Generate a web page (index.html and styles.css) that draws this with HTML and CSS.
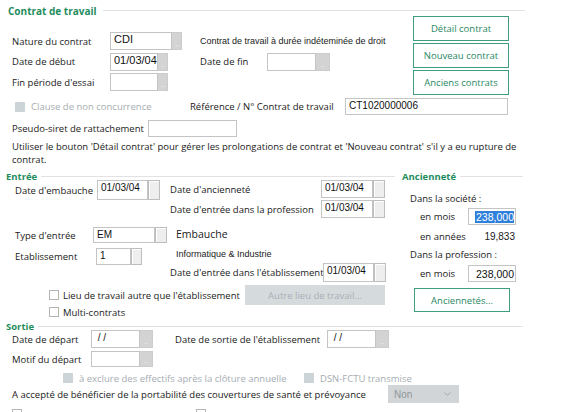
FILE: index.html
```html
<!DOCTYPE html>
<html lang="fr">
<head>
<meta charset="utf-8">
<title>Contrat de travail</title>
<link rel="stylesheet" href="styles.css">
</head>
<body>
<section class="s1">
  <div class="legend lg1"><span class="title">Contrat de travail</span><span class="rule"></span></div>
  <div class="top">
    <div class="left">
      <div class="row r1">
        <span class="lbl w98">Nature du contrat</span>
        <span class="fld"><span class="box w62 val big">CDI</span><span class="dots">...</span></span>
        <span class="note n1">Contrat de travail à durée indéteminée de droit</span>
      </div>
      <div class="row r2">
        <span class="lbl w98">Date de début</span>
        <span class="fld"><span class="box w48 val big">01/03/04</span><span class="dots">...</span></span>
        <span class="lbl fin">Date de fin</span>
        <span class="fld"><span class="box w49 val"></span><span class="dots d14">...</span></span>
      </div>
      <div class="row r3">
        <span class="lbl w98">Fin période d'essai</span>
        <span class="fld"><span class="box w48 val"></span><span class="dots">...</span></span>
      </div>
    </div>
    <div class="btns">
      <span class="gbtn">Détail contrat</span>
      <span class="gbtn">Nouveau contrat</span>
      <span class="gbtn">Anciens contrats</span>
    </div>
  </div>
  <div class="row r4">
    <span class="chkitem ci1"><span class="chk off"></span><span class="dis">Clause de non concurrence</span></span>
    <span class="lbl w155">Référence / N° Contrat de travail</span>
    <span class="fld"><span class="box w163 val">CT1020000006</span></span>
  </div>
  <div class="row r5">
    <span class="lbl w136">Pseudo-siret de rattachement</span>
    <span class="fld"><span class="box w89 val"></span></span>
  </div>
  <p class="para">Utiliser le bouton 'Détail contrat' pour gérer les prolongations de contrat et 'Nouveau contrat' s'il y a eu rupture de contrat.</p>
</section>

<section class="s2">
  <div class="colL">
    <div class="legend lg2"><span class="title">Entrée</span><span class="rule"></span></div>
    <div class="cols">
      <div class="c1">
        <div class="row e1">
          <span class="lbl w82">Date d'embauche</span>
          <span class="fld"><span class="box w51 val">01/03/04</span><span class="dots lite d12"></span></span>
        </div>
        <div class="row e2">
          <span class="lbl w78">Type d'entrée</span>
          <span class="fld"><span class="box w62 val">EM</span><span class="dots lite d12"></span></span>
        </div>
        <div class="row e3">
          <span class="lbl w81">Etablissement</span>
          <span class="fld"><span class="box w35 val">1</span><span class="dots lite d11"></span></span>
        </div>
      </div>
      <div class="c2">
        <div class="row f1">
          <span class="lbl w151">Date d'ancienneté</span>
          <span class="fld"><span class="box w52 val">01/03/04</span><span class="dots lite d12"></span></span>
        </div>
        <div class="row f2">
          <span class="lbl w151">Date d'entrée dans la profession</span>
          <span class="fld"><span class="box w52 val">01/03/04</span><span class="dots lite d12"></span></span>
        </div>
        <div class="row f3"><span class="info emb">Embauche</span></div>
        <div class="row f4"><span class="note">Informatique &amp; Industrie</span></div>
        <div class="row f5">
          <span class="lbl w153">Date d'entrée dans l'établissement</span>
          <span class="fld"><span class="box w51 val">01/03/04</span><span class="dots lite d12"></span></span>
        </div>
      </div>
    </div>
    <div class="row k1">
      <span class="chkitem ci2"><span class="chk"></span><span>Lieu de travail autre que l'établissement</span></span>
      <span class="disbtn">Autre lieu de travail...</span>
    </div>
    <div class="row k2">
      <span class="chkitem"><span class="chk"></span><span>Multi-contrats</span></span>
    </div>
  </div>
  <div class="colR">
    <div class="legend lg3"><span class="title">Ancienneté</span><span class="rule"></span></div>
    <div class="row a1">Dans la société :</div>
    <div class="row a2">
      <span class="lbl w48">en mois</span>
      <span class="fld"><span class="box w48 val num"><span class="sel">238,000</span></span></span>
    </div>
    <div class="row a3">
      <span class="lbl w48">en années</span>
      <span class="numv">19,833</span>
    </div>
    <div class="row a4">Dans la profession :</div>
    <div class="row a5">
      <span class="lbl w48">en mois</span>
      <span class="fld"><span class="box w48 val num">238,000</span></span>
    </div>
    <div class="row a6"><span class="gbtn wide">Anciennetés...</span></div>
  </div>
</section>

<section class="s3">
  <div class="legend lg4"><span class="title">Sortie</span><span class="rule"></span></div>
  <div class="row g1">
    <span class="lbl w79">Date de départ</span>
    <span class="fld"><span class="box w49 val">&nbsp;/ /</span><span class="dots d13">...</span></span>
    <span class="lbl w152 sortie">Date de sortie de l'établissement</span>
    <span class="fld"><span class="box w49 val">&nbsp;/ /</span><span class="dots d13">...</span></span>
  </div>
  <div class="row g2">
    <span class="lbl w79">Motif du départ</span>
    <span class="fld"><span class="box w49 val"></span><span class="dots d13">...</span></span>
  </div>
  <div class="row g3">
    <span class="chkitem ci3"><span class="chk off"></span><span class="dis">à exclure des effectifs après la clôture annuelle</span></span>
    <span class="chkitem"><span class="chk off"></span><span class="dis">DSN-FCTU transmise</span></span>
  </div>
  <div class="row g4">
    <span class="lbl w376">A accepté de bénéficier de la portabilité des couvertures de santé et prévoyance</span>
    <span class="select"><span>Non</span><svg class="chev" width="7" height="4" viewBox="0 0 7 4"><path d="M0.5 0.5 L3.5 3.3 L6.5 0.5" fill="none" stroke="#a4a9ad" stroke-width="1"/></svg></span>
  </div>
  <div class="row g5">
    <span class="chkitem ci4"><span class="chk"></span></span>
    <span class="chkitem"><span class="chk"></span></span>
  </div>
</section>
</body>
</html>
```

FILE: styles.css
```css
* { box-sizing: border-box; }
html, body { margin: 0; padding: 0; }
body {
  width: 576px;
  height: 412px;
  overflow: hidden;
  background: #ffffff;
  font-family: "Open Sans", "Noto Sans", sans-serif;
  font-size: 9.5px;
  color: #1a1a1a;
}
section { display: block; }

/* legends */
.legend { display: flex; align-items: flex-start; white-space: nowrap; }
.legend .title { color: #1f8d5d; font-weight: 700; }
.legend .rule { flex: 1; border-top: 1px solid #e2e2e2; margin-left: 4px; }
.lg1 { height: 16px; padding-left: 8px; width: 525px; }
.lg1 .title { line-height: 14px; margin-top: 4px; font-size: 10px; }
.lg1 .rule { margin-top: 10px; margin-left: 6px; }
.lg2, .lg3, .lg4 { height: 10px; }
.lg2 .title, .lg3 .title, .lg4 .title { line-height: 12px; margin-top: 1px; }
.lg2 .rule, .lg3 .rule, .lg4 .rule { margin-top: 6px; }
.lg2 { padding-left: 6px; padding-right: 3px; }
.lg3 { padding-left: 4px; }
.lg4 { padding-left: 6px; width: 523px; }

/* rows and fields */
.row { display: flex; align-items: center; white-space: nowrap; }
.lbl { flex: none; }
.fld { display: flex; flex: none; align-self: stretch; }
.box {
  display: block;
  border: 1px solid #c4c4c4;
  background: #fff;
  font-family: "Liberation Sans", Arial, sans-serif;
  font-size: 10px;
  line-height: 12px;
  padding: 1px 0 0 3px;
  color: #111;
  overflow: hidden;
}
.box.big { font-size: 11px; padding-top: 0; }
.box.num { text-align: right; padding: 2px 1px 0 0; font-size: 10.5px; }
.sel { background: #2f7fdc; color: #ffffff; padding: 0 0 0 1px; }
.dots {
  display: flex;
  align-items: flex-end;
  justify-content: center;
  width: 10px;
  background: #d3d3d3;
  border: 1px solid #cccccc;
  border-left: none;
  color: #f4f4f4;
  font-size: 6px;
  line-height: 9px;
  letter-spacing: -0.5px;
  overflow: hidden;
}
.dots.lite { background: #eeeeee; border: 1px solid #bdbdbd; box-shadow: inset 1px 1px 0 #fff; }
.d11 { width: 11px; }
.d12 { width: 12px; }
.d13 { width: 13px; }
.d14 { width: 14px; }

.w35 { width: 35px; } .w48 { width: 48px; } .w49 { width: 49px; } .w51 { width: 51px; }
.w52 { width: 52px; } .w62 { width: 62px; } .w78 { width: 78px; } .w79 { width: 79px; }
.w81 { width: 81px; } .w82 { width: 82px; } .w89 { width: 89px; } .w98 { width: 98px; }
.w136 { width: 136px; } .w151 { width: 151px; } .w152 { width: 152px; } .w153 { width: 153px; }
.w155 { width: 155px; } .w163 { width: 163px; } .w376 { width: 376px; }

.note {
  font-family: "Liberation Sans", Arial, sans-serif;
  font-size: 9px;
  color: #1a1a1a;
}
.info { font-size: 10.5px; }

/* checkboxes */
.chkitem { display: flex; align-items: center; flex: none; }
.chk {
  width: 10px; height: 10px; flex: none;
  border: 1px solid #b4b4b4; background: #fff;
  margin-right: 4px;
}
.chk.off { background: #ccd4d8; border-color: #ccd4d8; margin-right: 6px; }
.dis { color: #a6adb2; }

/* green buttons */
.gbtn {
  display: flex; align-items: center; justify-content: center;
  height: 25px; width: 96px;
  border: 1.5px solid #3d9d7d;
  background: #fff;
  color: #2a8865;
  font-size: 9.5px;
}
.disbtn {
  display: flex; align-items: center; justify-content: center;
  width: 140px; height: 20px;
  background: #d5dadd;
  color: #a9b0b5;
}

/* section 1 */
.s1 { height: 166px; }
.top { display: flex; }
.top .left { width: 413px; padding: 16px 0 0 12px; }
.btns { display: flex; flex-direction: column; gap: 2px; width: 96px; }
.r1, .r2, .r3 { height: 18px; }
.r2, .r3 { margin-top: 2.5px; }
.n1 { margin-left: 18px; }
.fin { margin-left: 32px; width: 67px; }
.r4 { height: 17px; margin-top: 3px; padding-left: 15px; }
.ci1 { width: 175px; }
.r5 { height: 17px; margin-top: 5px; padding-left: 12px; }
.para { margin: 3px 0 0 0; padding-left: 12px; width: 530px; line-height: 13px; white-space: normal; }

/* section 2 */
.s2 { display: flex; margin-top: 4px; height: 147px; }
.colL { width: 398px; flex: none; }
.colR { width: 125px; flex: none; }
.cols { display: flex; align-items: flex-start; }
.c1 { width: 170px; padding-left: 15px; flex: none; }
.c2 { width: 216px; flex: none; }
.e1 { height: 20px; }
.e2 { height: 16px; margin-top: 27px; }
.e3 { height: 17px; margin-top: 5px; }
.f1 { height: 18px; }
.f2 { height: 18px; margin-top: 2px; }
.f3 { height: 12px; margin-top: 10px; padding-left: 6px; }
.f4 { height: 12px; margin-top: 8px; padding-left: 6px; }
.f5 { height: 19px; margin-top: 3px; }
.k1 { height: 20px; margin-top: 3px; padding-left: 49px; }
.ci2 { width: 196px; }
.k2 { height: 10px; margin-top: 2px; padding-left: 49px; }
.a1 { height: 14px; margin-top: 11px; padding-left: 12px; }
.a2 { height: 17px; margin-top: 3px; padding-left: 22px; }
.a3 { height: 14px; margin-top: 4px; padding-left: 22px; }
.a4 { height: 14px; margin-top: 4px; padding-left: 12px; }
.a5 { height: 17px; margin-top: 4px; padding-left: 22px; }
.a6 { height: 24px; margin-top: 6px; padding-left: 16px; }
.a6 .gbtn { height: 24px; }
.numv {
  width: 48px; text-align: right; padding-right: 1px;
  font-family: "Liberation Sans", Arial, sans-serif; font-size: 10px;
}

/* section 3 */
.s3 { margin-top: 3px; }
.g1 { height: 18px; padding-left: 12px; }
.sortie { margin-left: 22px; }
.g2 { height: 16px; margin-top: 3px; padding-left: 12px; }
.g3 { height: 10px; margin-top: 6px; padding-left: 63px; }
.ci3 { width: 241px; }
.g4 { height: 18px; margin-top: 2px; padding-left: 12px; }
.select {
  display: flex; align-items: center; justify-content: space-between;
  width: 71px; height: 18px;
  background: #d2d5d7;
  color: #8f959a;
  padding: 0 8px 0 6px;
  font-family: "Liberation Sans", Arial, sans-serif;
  font-size: 10px;
}
.g5 { height: 10px; margin-top: 6px; padding-left: 12px; }
.ci4 { width: 184px; }
```
